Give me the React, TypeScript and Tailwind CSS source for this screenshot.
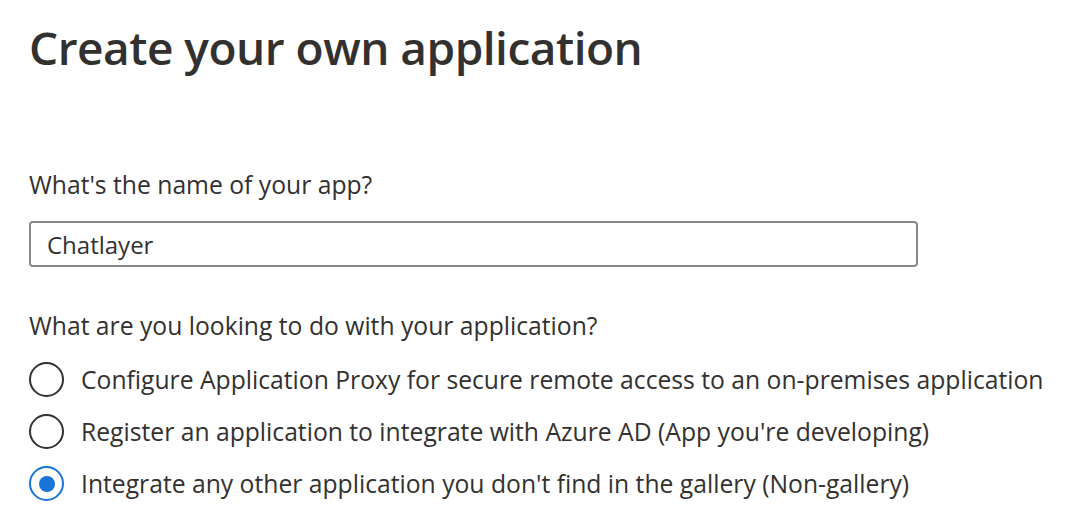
import { useState } from 'react';

const options = [
  'Configure Application Proxy for secure remote access to an on-premises application',
  "Register an application to integrate with Azure AD (App you're developing)",
  "Integrate any other application you don't find in the gallery (Non-gallery)",
];

export default function App() {
  const [name, setName] = useState('Chatlayer');
  const [choice, setChoice] = useState(2);

  return (
    <div className="w-[1072px] h-[531px] bg-white text-[#323130] pl-[29px] pt-[19px] overflow-hidden" style={{ fontFamily: '"Open Sans", "Noto Sans", sans-serif' }}>
      <h1 className="text-[46px] leading-[56px] font-semibold tracking-[-0.5px]">Create your own application</h1>

      <div className="mt-[94px] text-[24.7px] leading-[32px]">What's the name of your app?</div>
      <input
        value={name}
        onChange={e => setName(e.target.value)}
        className="mt-[20px] block w-[889px] h-[46px] border-2 border-[#8a8886] rounded-[4px] px-[16px] text-[24px] text-[#323130] outline-none"
      />

      <div className="mt-[43px] text-[24.7px] leading-[32px]">What are you looking to do with your application?</div>
      <div className="mt-[20px] flex flex-col gap-[17px]">
        {options.map((opt, i) => (
          <label key={i} className="flex items-center gap-[17px] cursor-pointer text-[24.7px] leading-[35px] whitespace-nowrap" onClick={() => setChoice(i)}>
            <span
              className={
                i === choice
                  ? 'w-[35px] h-[35px] rounded-full border-2 border-[#1a73d6] flex items-center justify-center shrink-0'
                  : 'w-[35px] h-[35px] rounded-full border-2 border-[#323130] shrink-0'
              }
            >
              {i === choice && <span className="w-[16px] h-[16px] rounded-full bg-[#1a73d6]" />}
            </span>
            <span>{opt}</span>
          </label>
        ))}
      </div>
    </div>
  );
}
